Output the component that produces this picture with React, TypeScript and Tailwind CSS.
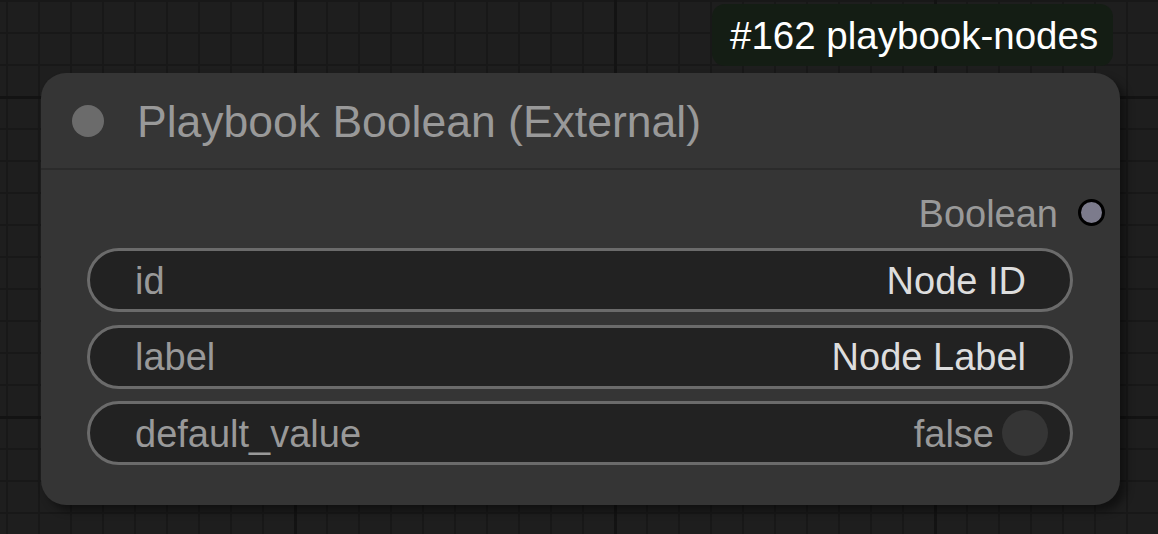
import React from "react";

const font = "font-['Liberation_Sans',Arial,sans-serif]";

const TextField = (props: { label: string; value: string }): JSX.Element => {
	const { label, value } = props;
	return (
		<div className="h-[64px] flex items-center justify-between rounded-full border-[3px] border-[#6b6b6b] bg-[#222222] pl-[45px] pr-[44px]">
			<span className="text-[38px] mt-[2px] text-[#999999]">{label}</span>
			<span className="text-[38px] mt-[2px] text-[#dddddd]">{value}</span>
		</div>
	);
};

const ToggleField = (props: { label: string; value: boolean }): JSX.Element => {
	const { label, value } = props;
	return (
		<div className="h-[64px] flex items-center justify-between rounded-full border-[3px] border-[#6b6b6b] bg-[#222222] pl-[45px] pr-[22px]">
			<span className="text-[38px] mt-[2px] text-[#999999]">{label}</span>
			<div className="flex items-center gap-[8px]">
				<span className="text-[38px] mt-[2px] text-[#999999]">{value ? "true" : "false"}</span>
				<div className="w-[46px] h-[46px] rounded-full bg-[#353535]" />
			</div>
		</div>
	);
};

const App = (): JSX.Element => {
	return (
		<div
			className={`relative w-[1158px] h-[534px] overflow-hidden ${font} bg-[#1e1e1e] bg-[linear-gradient(to_right,#131313_3px,transparent_3px),linear-gradient(to_bottom,#131313_3px,transparent_3px),linear-gradient(to_right,#181818_2px,transparent_2px),linear-gradient(to_bottom,#181818_2px,transparent_2px)] bg-[size:320px_320px,320px_320px,32px_32px,32px_32px] bg-[position:294px_0px,0px_96px,6px_0px,0px_0px]`}
		>
			{/* group badge */}
			<div className="absolute left-[712px] top-[4px] h-[62px] w-[401px] rounded-[13px] bg-[#141d14] flex items-center pl-[18px]">
				<span className="text-[38.5px] mt-[1px] text-white">#162 playbook-nodes</span>
			</div>

			{/* node */}
			<div className="absolute left-[41px] top-[73px] w-[1079px] h-[432px] rounded-[25px] bg-[#353535] shadow-[6px_6px_8px_rgba(0,0,0,0.45)] flex flex-col">
				<div className="h-[97px] shrink-0 flex items-center pl-[31px] gap-[33px] border-b-[2px] border-[#2b2b2b]">
					<div className="w-[32px] h-[32px] rounded-full bg-[#6b6b6b]" />
					<span className="text-[44.5px] mt-[3px] text-[#999999]">Playbook Boolean (External)</span>
				</div>

				<div className="mt-[25px] h-[38px] flex items-center justify-end pr-[15px] gap-[20px]">
					<span className="text-[38px] text-[#999999]">Boolean</span>
					<div className="w-[27px] h-[27px] -mt-[4px] rounded-full border-[3px] border-black bg-[#7c7b8c]" />
				</div>

				<div className="mt-[15px] pl-[46px] pr-[47px] flex flex-col gap-[12.5px]">
					<TextField label="id" value="Node ID" />
					<TextField label="label" value="Node Label" />
					<ToggleField label="default_value" value={false} />
				</div>
			</div>
		</div>
	);
};

export default App;
